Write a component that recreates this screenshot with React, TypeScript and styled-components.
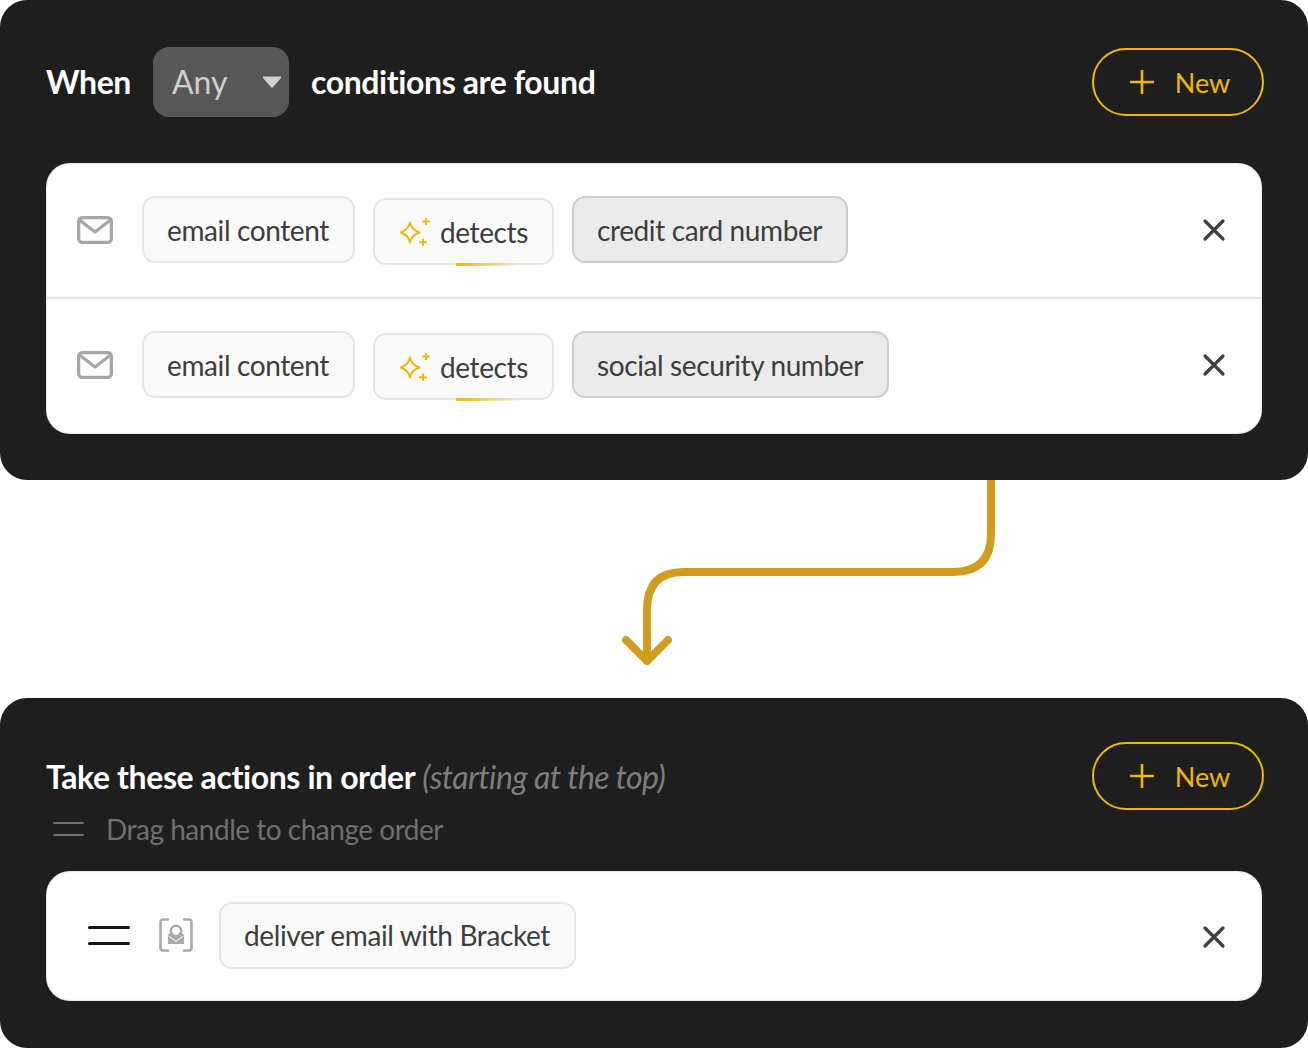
import React from "react";
import styled, { createGlobalStyle } from "styled-components";

const Global = createGlobalStyle`
  html, body { margin: 0; padding: 0; background: #fff; }
  body { font-family: Lato, "Open Sans", sans-serif; }
`;

const Page = styled.div`
  width: 1308px;
  display: flex;
  flex-direction: column;
`;

const Panel = styled.section<{ $height: number; $pad: number }>`
  box-sizing: border-box;
  height: ${(p) => p.$height}px;
  padding: ${(p) => p.$pad}px 46px 0;
  background: #1e1e1e;
  border-radius: 27px;
  display: flex;
  flex-direction: column;
`;

const Header = styled.header<{ $gap: number }>`
  display: flex;
  align-items: flex-start;
  justify-content: space-between;
  margin-bottom: ${(p) => p.$gap}px;
`;

const Sentence = styled.div`
  display: flex;
  align-items: center;
  gap: 22px;
  & > span {
    padding-bottom: 2px;
  }
`;

const Strong = styled.span`
  font-size: 32px;
  font-weight: 700;
  letter-spacing: -0.4px;
  color: #fff;
  white-space: nowrap;
`;

const Select = styled.div`
  box-sizing: border-box;
  width: 136px;
  height: 70px;
  padding: 0 7px 2px 19px;
  border-radius: 16px;
  background: #575757;
  display: flex;
  align-items: center;
  justify-content: space-between;
  color: #cfcfcf;
  font-size: 32px;
  & > svg {
    margin-top: 2px;
  }
`;

const NewButton = styled.button<{ $top?: number }>`
  box-sizing: border-box;
  width: 172px;
  height: 68px;
  margin: ${(p) => p.$top ?? 0}px -2px 0 0;
  border: 2px solid #f2b705;
  border-radius: 34px;
  background: transparent;
  color: #f2b705;
  font: 400 27px Lato, sans-serif;
  display: flex;
  align-items: center;
  justify-content: center;
  gap: 20px;
  padding: 0 0 0 3px;
`;

const Card = styled.div`
  background: #fff;
  border-radius: 24px;
  box-shadow: inset 0 0 2px rgba(0, 0, 0, 0.3);
  display: flex;
  flex-direction: column;
`;

const Row = styled.div<{ $height: number; $divider?: boolean; $pad: number; $gap: number; $lift: number }>`
  box-sizing: border-box;
  height: ${(p) => p.$height}px;
  padding: 0 36px ${(p) => p.$lift}px ${(p) => p.$pad}px;
  display: flex;
  align-items: center;
  gap: ${(p) => p.$gap}px;
  border-bottom: ${(p) => (p.$divider ? "2px solid #e4e4e4" : "none")};
`;

const Chip = styled.div<{ $tone?: "plain" | "value"; $drop?: boolean; $lead?: number }>`
  box-sizing: border-box;
  position: relative;
  height: ${(p) => (p.$tone === "value" ? 67 : 67)}px;
  padding: 0 24px 0 23px;
  display: flex;
  align-items: center;
  gap: 10px;
  margin-top: ${(p) => (p.$drop ? 4 : 0)}px;
  margin-left: ${(p) => p.$lead ?? 0}px;
  border-radius: 13px;
  border: 2px solid ${(p) => (p.$tone === "value" ? "#cdcdcd" : "#e6e6e6")};
  background: ${(p) => (p.$tone === "value" ? "#ebebeb" : "#fafafa")};
  color: #3d3d3d;
  font-size: 28px;
  letter-spacing: -0.38px;
  white-space: nowrap;
`;

const AiChip = styled(Chip)`
  padding: 0 24px 0 25px;
  &::after {
    content: "";
    position: absolute;
    left: 81px;
    bottom: -3px;
    width: 66px;
    height: 3px;
    background: linear-gradient(90deg, #f2b705, rgba(242, 183, 5, 0));
  }
`;

const CloseSlot = styled.div<{ $drop?: number }>`
  margin: ${(p) => p.$drop ?? 0}px 0 0 auto;
  display: flex;
`;

const HandleSlot = styled.div`
  display: flex;
  margin-top: 1px;
`;

const TitleLine = styled.div`
  display: flex;
  align-items: baseline;
  gap: 7px;
  margin-top: 15px;
`;

const Muted = styled.em`
  font-size: 32px;
  font-weight: 400;
  letter-spacing: -0.6px;
  color: #7d7d7d;
`;

const Hint = styled.div`
  display: flex;
  align-items: center;
  gap: 22px;
  margin-top: 16px;
  padding-left: 7px;
  color: #6f6f6f;
  font-size: 28px;
  letter-spacing: -0.48px;
`;

const TitleBlock = styled.div`
  display: flex;
  flex-direction: column;
`;

const Connector = styled.svg`
  display: block;
  flex: none;
`;

const Mail = () => (
  <svg width="36" height="28" viewBox="0 0 36 28" fill="none" stroke="#a6a6a6" strokeWidth="3.3">
    <rect x="1.65" y="1.65" width="32.7" height="24.7" rx="3.5" />
    <path d="M2.5 4 L18 16 L33.5 4" strokeLinejoin="round" />
  </svg>
);

const Close = () => (
  <svg width="24" height="24" viewBox="0 0 24 24" fill="none" stroke="#3f3f3f" strokeWidth="3.2" strokeLinecap="round">
    <path d="M3 3 L21 21 M21 3 L3 21" />
  </svg>
);

const Plus = () => (
  <svg width="26" height="26" viewBox="0 0 26 26" fill="none" stroke="#f2b705" strokeWidth="2.6">
    <path d="M13 1 V25 M1 13 H25" />
  </svg>
);

const Caret = () => (
  <svg width="20" height="12" viewBox="0 0 20 12">
    <path d="M1.5 0.5 H18.5 Q20 0.5 19 2 L11 11 Q10 12 9 11 L1 2 Q0 0.5 1.5 0.5 Z" fill="#d2d2d2" />
  </svg>
);

const Sparkle = () => (
  <svg width="30" height="30" viewBox="0 0 30 30" fill="none" stroke="#f2b705" strokeWidth="1.9" strokeLinejoin="round">
    <path d="M10 5.5 C11 11 13.5 13.5 19.5 15.5 C13.5 17.5 11 20 10 25.5 C9 20 6.5 17.5 0.5 15.5 C6.5 13.5 9 11 10 5.5 Z" />
    <path d="M26 1 V8 M22.3 4.5 H29.7 M23 21.5 V29 M19.2 25.2 H26.8" />
  </svg>
);

const Handle = ({ color, width, gap, stroke }: { color: string; width: number; gap: number; stroke: number }) => (
  <svg width={width} height={gap + stroke} viewBox={`0 0 ${width} ${gap + stroke}`} stroke={color} strokeWidth={stroke} strokeLinecap="round">
    <path d={`M${stroke / 2} ${stroke / 2} H${width - stroke / 2} M${stroke / 2} ${gap + stroke / 2} H${width - stroke / 2}`} />
  </svg>
);

const Secure = () => (
  <svg width="34" height="34" viewBox="0 0 34 34" fill="none">
    <path d="M9 1.5 H4 Q1.5 1.5 1.5 4 V30 Q1.5 32.5 4 32.5 H9 M25 1.5 H30 Q32.5 1.5 32.5 4 V30 Q32.5 32.5 30 32.5 H25" stroke="#a9a9a9" strokeWidth="2.6" strokeLinecap="round" />
    <circle cx="17" cy="13" r="5.2" stroke="#a9a9a9" strokeWidth="2.4" />
    <path d="M9 16.5 L13 14.5 L17 18 L21 14.5 L25 16.5 V26 H9 Z" fill="#a9a9a9" />
    <path d="M9.5 18 L17 23.2 L24.5 18" stroke="#fff" strokeWidth="0.9" />
  </svg>
);

const ConditionRow = ({ value, divider, height, lift }: { value: string; divider?: boolean; height: number; lift: number }) => (
  <Row $height={height} $divider={divider} $pad={31} $gap={18} $lift={lift}>
    <Mail />
    <Chip $lead={11}>email content</Chip>
    <AiChip $drop>
      <Sparkle />
      detects
    </AiChip>
    <Chip $tone="value">{value}</Chip>
    <CloseSlot>
      <Close />
    </CloseSlot>
  </Row>
);

export default function App() {
  return (
    <Page>
      <Global />
      <Panel $height={480} $pad={47}>
        <Header $gap={46}>
          <Sentence>
            <Strong>When</Strong>
            <Select>
              Any
              <Caret />
            </Select>
            <Strong>conditions are found</Strong>
          </Sentence>
          <NewButton $top={1}>
            <Plus />
            New
          </NewButton>
        </Header>
        <Card>
          <ConditionRow value="credit card number" divider height={136} lift={1} />
          <ConditionRow value="social security number" height={135} lift={4} />
        </Card>
      </Panel>
      <Connector width="1308" height="218" viewBox="0 0 1308 218" fill="none">
        <path
          d="M991 0 V54 Q991 92 953 92 H683 Q647 92 647 130 V181 M626 160 L647 181 L668 160"
          stroke="#d29c1f"
          strokeWidth="8"
          strokeLinecap="round"
          strokeLinejoin="round"
        />
      </Connector>
      <Panel $height={350} $pad={44}>
        <Header $gap={25}>
          <TitleBlock>
            <TitleLine>
              <Strong>Take these actions in order</Strong>
              <Muted>(starting at the top)</Muted>
            </TitleLine>
            <Hint>
              <Handle color="#6f6f6f" width={31} gap={12} stroke={2} />
              Drag handle to change order
            </Hint>
          </TitleBlock>
          <NewButton>
            <Plus />
            New
          </NewButton>
        </Header>
        <Card>
          <Row $height={130} $pad={42} $gap={29} $lift={2}>
            <HandleSlot>
              <Handle color="#111" width={42} gap={16} stroke={3} />
            </HandleSlot>
            <Secure />
            <Chip $lead={-3}>deliver email with Bracket</Chip>
            <CloseSlot $drop={4}>
              <Close />
            </CloseSlot>
          </Row>
        </Card>
      </Panel>
    </Page>
  );
}
